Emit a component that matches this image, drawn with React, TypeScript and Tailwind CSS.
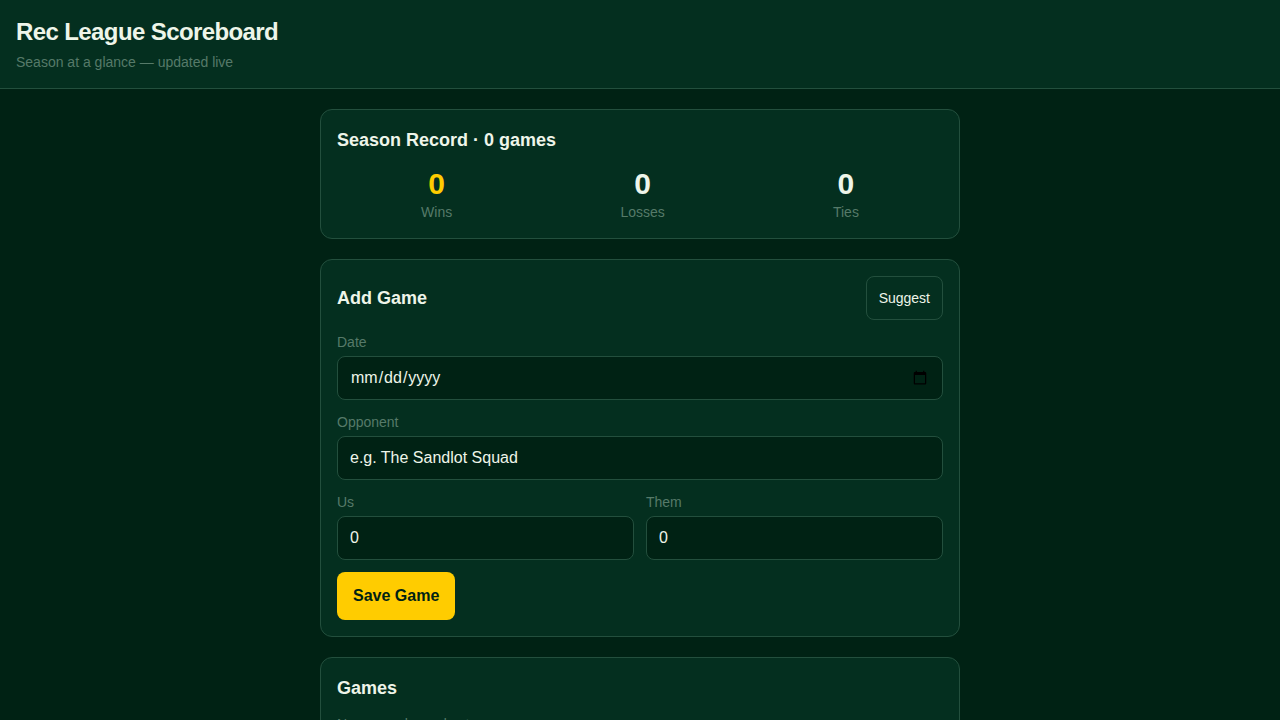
import { useState } from 'react';
import type { FormEvent } from 'react';

type Game = {
  id: number;
  date: string;
  opponent: string;
  us: number;
  them: number;
};

const opponents = ['The Sandlot Squad', 'Brick City Ballers', 'Midnight Runners', 'Park Street Kings'];

const cardClass = 'flex flex-col gap-3 rounded-xl border border-[#234f3d] bg-[#042f1f] p-4';
const labelClass = 'text-sm text-[#567a69]';
const inputClass = 'h-11 w-full rounded-lg border border-[#234f3d] bg-[#002214] px-3 text-base text-[#eef5e9] placeholder:text-[#eef5e9]';

function Stat({ label, value, highlight }: { label: string; value: number; highlight?: boolean }) {
  return (
    <div className="text-center">
      <div className={highlight ? 'text-3xl font-bold text-[#ffcc00]' : 'text-3xl font-bold'}>{value}</div>
      <div className={labelClass}>{label}</div>
    </div>
  );
}

export default function App() {
  const [games, setGames] = useState<Game[]>([]);
  const [date, setDate] = useState('');
  const [opponent, setOpponent] = useState('');
  const [us, setUs] = useState('0');
  const [them, setThem] = useState('0');

  const wins = games.filter((g) => g.us > g.them).length;
  const losses = games.filter((g) => g.us < g.them).length;
  const ties = games.length - wins - losses;

  const suggest = () => {
    setOpponent(opponents[games.length % opponents.length]);
  };

  const save = (e: FormEvent) => {
    e.preventDefault();
    if (!opponent) return;
    setGames([...games, { id: Date.now(), date, opponent, us: Number(us), them: Number(them) }]);
    setDate('');
    setOpponent('');
    setUs('0');
    setThem('0');
  };

  return (
    <div className="min-h-screen bg-[#002214] font-['Liberation_Sans',sans-serif] text-[#eef5e9]">
      <header className="border-b border-[#234f3d] bg-[#042f1f] p-4">
        <h1 className="text-2xl font-bold tracking-tight">Rec League Scoreboard</h1>
        <p className="mt-1 text-sm text-[#567a69]">Season at a glance — updated live</p>
      </header>

      <main className="mx-auto flex max-w-[640px] flex-col gap-5 py-5">
        {/* Record */}
        <section className={cardClass}>
          <h2 className="text-lg/7 font-bold">{`Season Record · ${games.length} games`}</h2>
          <div className="flex justify-around">
            <Stat label="Wins" value={wins} highlight />
            <Stat label="Losses" value={losses} />
            <Stat label="Ties" value={ties} />
          </div>
        </section>

        {/* Form */}
        <form onSubmit={save} className={cardClass}>
          <div className="flex items-center justify-between">
            <h2 className="text-lg/7 font-bold">Add Game</h2>
            <button type="button" onClick={suggest} className="h-11 rounded-lg border border-[#234f3d] px-3 text-sm">
              Suggest
            </button>
          </div>

          <div className="flex flex-col gap-1">
            <label htmlFor="date" className={labelClass}>Date</label>
            <input id="date" type="date" value={date} onChange={(e) => setDate(e.target.value)} className={inputClass} />
          </div>

          <div className="flex flex-col gap-1">
            <label htmlFor="opponent" className={labelClass}>Opponent</label>
            <input
              id="opponent"
              type="text"
              placeholder="e.g. The Sandlot Squad"
              value={opponent}
              onChange={(e) => setOpponent(e.target.value)}
              className={inputClass}
            />
          </div>

          <div className="grid grid-cols-2 gap-3">
            <div className="flex flex-col gap-1">
              <label htmlFor="us" className={labelClass}>Us</label>
              <input id="us" type="number" min="0" value={us} onChange={(e) => setUs(e.target.value)} className={inputClass} />
            </div>
            <div className="flex flex-col gap-1">
              <label htmlFor="them" className={labelClass}>Them</label>
              <input id="them" type="number" min="0" value={them} onChange={(e) => setThem(e.target.value)} className={inputClass} />
            </div>
          </div>

          <button type="submit" className="h-12 self-start rounded-lg bg-[#ffcc00] px-4 text-base font-bold text-[#002214]">
            Save Game
          </button>
        </form>

        {/* Games */}
        <section className={cardClass}>
          <h2 className="text-lg/7 font-bold">Games</h2>
          {games.length === 0 ? (
            <p className={labelClass}>No games logged yet.</p>
          ) : (
            <ul className="flex flex-col gap-2">
              {games.map((g) => (
                <li key={g.id} className="flex justify-between text-sm">
                  <span>{g.date} {g.opponent}</span>
                  <span className="font-bold">{g.us}–{g.them}</span>
                </li>
              ))}
            </ul>
          )}
        </section>
      </main>
    </div>
  );
}
